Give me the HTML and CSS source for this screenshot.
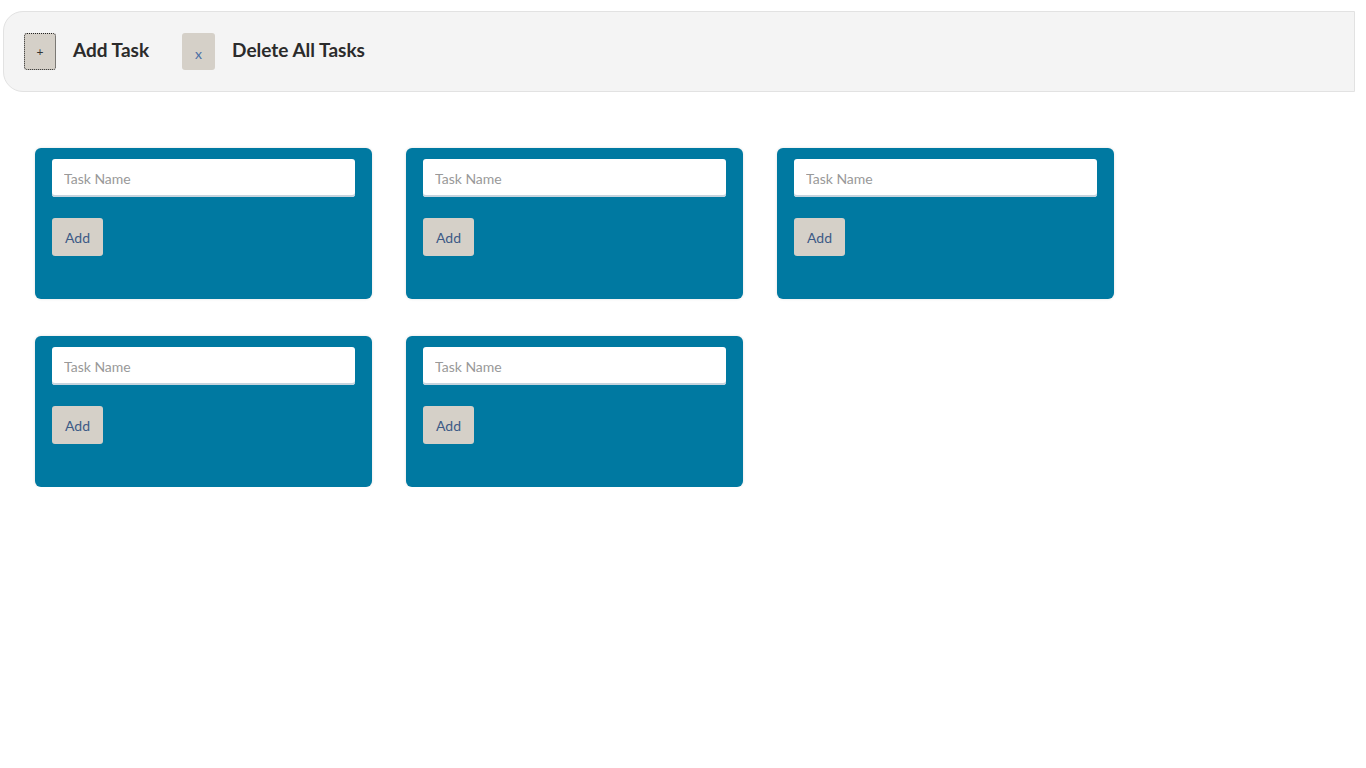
FILE: index.html
```html
<!DOCTYPE html>
<html>
<head>
<meta charset="utf-8">
<title>Tasks</title>
<link rel="stylesheet" href="styles.css">
</head>
<body>
<header class="toolbar">
  <button class="tool-btn tool-btn-focus">+</button>
  <span class="tool-label">Add Task</span>
  <button class="tool-btn tool-btn-x">x</button>
  <span class="tool-label">Delete All Tasks</span>
</header>
<main class="board">
  <div class="card">
    <input class="task-input" type="text" placeholder="Task Name">
    <button class="add-btn">Add</button>
  </div>
  <div class="card">
    <input class="task-input" type="text" placeholder="Task Name">
    <button class="add-btn">Add</button>
  </div>
  <div class="card">
    <input class="task-input" type="text" placeholder="Task Name">
    <button class="add-btn">Add</button>
  </div>
  <div class="card">
    <input class="task-input" type="text" placeholder="Task Name">
    <button class="add-btn">Add</button>
  </div>
  <div class="card">
    <input class="task-input" type="text" placeholder="Task Name">
    <button class="add-btn">Add</button>
  </div>
</main>
</body>
</html>
```

FILE: styles.css
```css
html, body {
  margin: 0;
  padding: 0;
  background: #ffffff;
  font-family: "Lato", "DejaVu Sans", sans-serif;
}

body {
  padding: 11px 11px 0 3px;
}

.toolbar {
  display: flex;
  align-items: center;
  height: 81px;
  padding: 0 0 0 20px;
  background: #f4f4f4;
  border: 1px solid #e2e2e2;
  border-radius: 20px 0 0 20px;
  box-sizing: border-box;
}

.tool-btn {
  width: 32px;
  height: 37px;
  padding: 0;
  margin: 0 0 1px 0;
  border: none;
  border-radius: 3px;
  background: #d5d0c8;
  font-family: "Lato", "DejaVu Sans", sans-serif;
  cursor: pointer;
}

.tool-btn-focus {
  border: 1px dotted #222;
  font-size: 12px;
  color: #333;
  width: 32px;
}

.tool-btn-x {
  font-size: 14px;
  color: #4a6fa5;
  width: 33px;
  padding-top: 4px;
}

.tool-label {
  font-weight: bold;
  font-size: 19px;
  color: #2b2b2b;
  margin-left: 17px;
  margin-right: 33px;
  margin-bottom: 4px;
}

.board {
  display: flex;
  flex-wrap: wrap;
  column-gap: 34px;
  row-gap: 37px;
  padding: 56px 0 0 32px;
  width: 1120px;
}

.card {
  width: 337px;
  height: 151px;
  box-sizing: border-box;
  padding: 11px 17px;
  background: #0079a1;
  border-radius: 6px;
  box-shadow: 0 0 3px rgba(0, 0, 0, 0.12);
  display: flex;
  flex-direction: column;
  align-items: flex-start;
}

.task-input {
  width: 303px;
  height: 38px;
  box-sizing: border-box;
  border: none;
  border-radius: 3px;
  box-shadow: inset 0 -2px 0 #c6d4de;
  padding: 0 12px;
  font-family: "Lato", "DejaVu Sans", sans-serif;
  font-size: 14px;
  color: #333;
  background: #fff;
  outline: none;
}

.task-input::placeholder {
  color: #999;
}

.add-btn {
  margin-top: 21px;
  width: 51px;
  height: 38px;
  padding: 0;
  border: none;
  border-radius: 3px;
  background: #d5d0c8;
  color: #3d5a86;
  font-family: "Lato", "DejaVu Sans", sans-serif;
  font-size: 14px;
  cursor: pointer;
}
```
